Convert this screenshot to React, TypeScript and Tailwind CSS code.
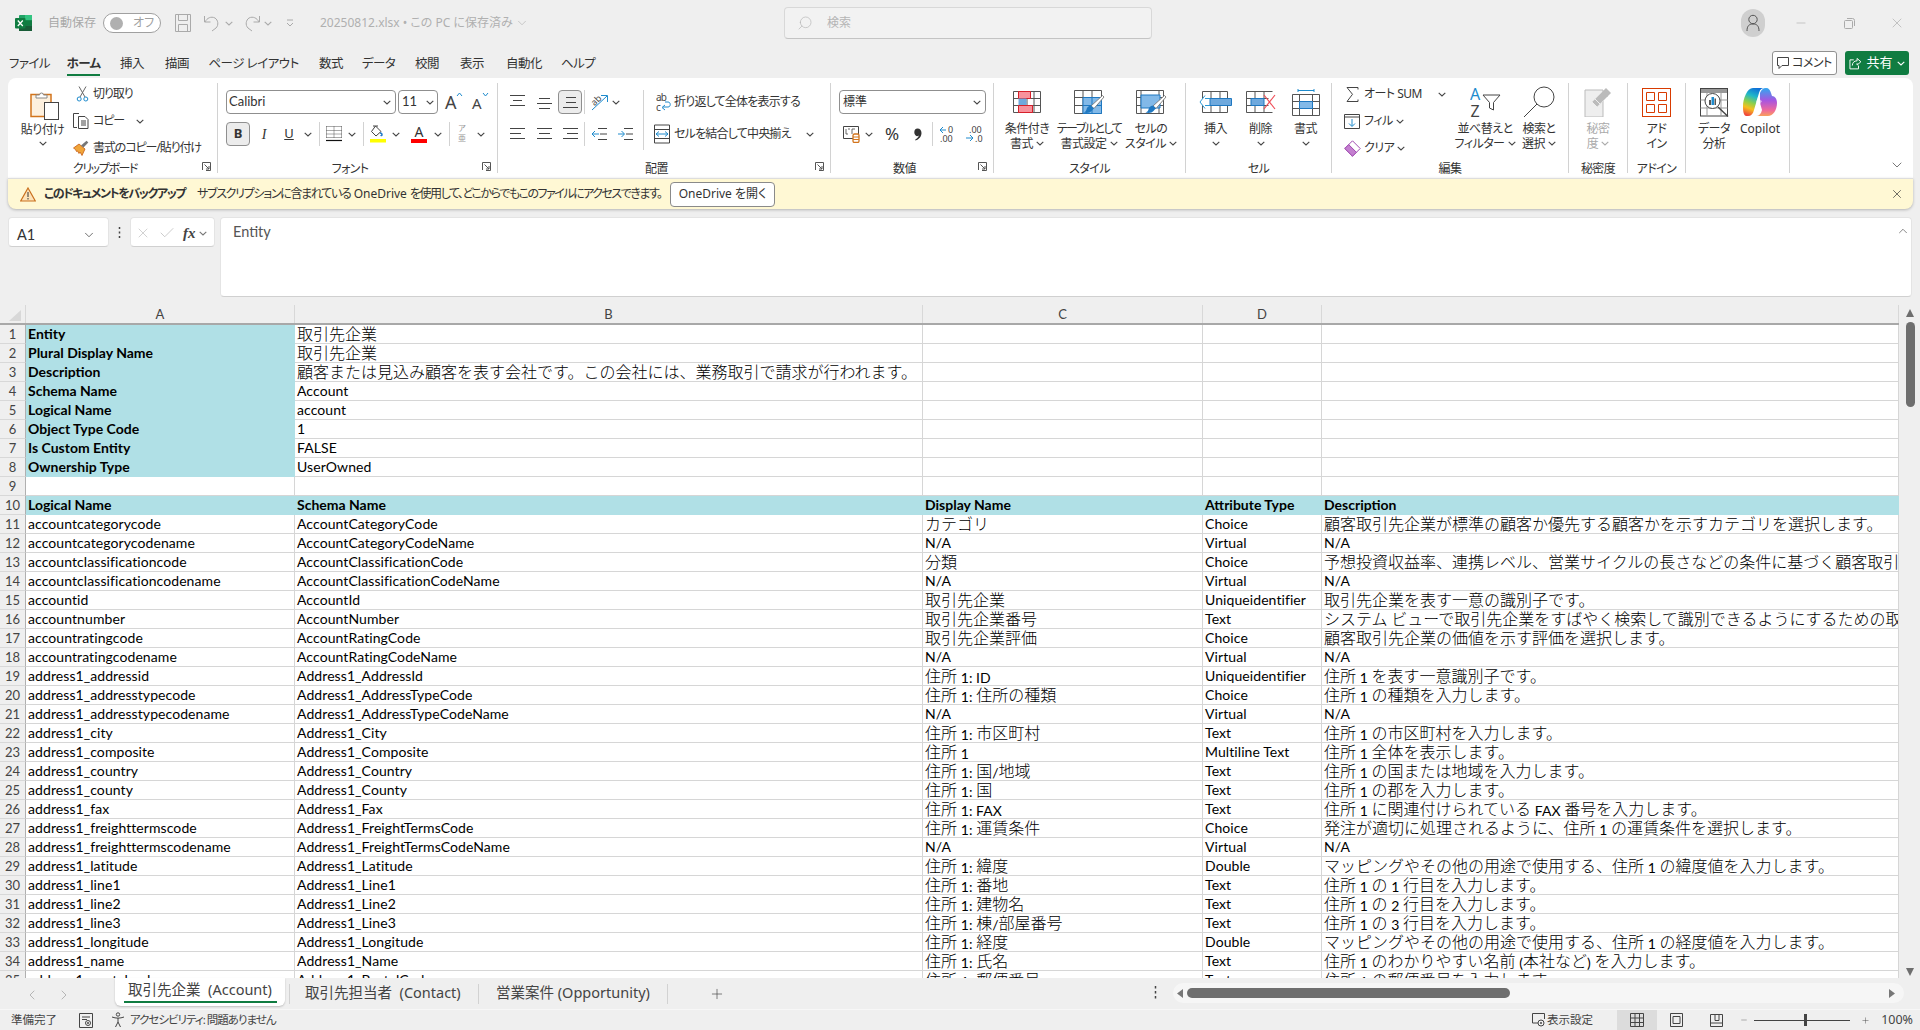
import React from "react";
import { ChevronDown, ChevronUp, ChevronLeft, ChevronRight, X, Minus, Search, Check, Plus } from "lucide-react";

const COLS = "grid grid-cols-[26px_269px_628px_280px_119px_577px]";
const rows: string[][] = [
  ["accountcategorycode","AccountCategoryCode","カテゴリ","Choice","顧客取引先企業が標準の顧客か優先する顧客かを示すカテゴリを選択します。"],
  ["accountcategorycodename","AccountCategoryCodeName","N/A","Virtual","N/A"],
  ["accountclassificationcode","AccountClassificationCode","分類","Choice","予想投資収益率、連携レベル、営業サイクルの長さなどの条件に基づく顧客取引先企業の分類を選択します。"],
  ["accountclassificationcodename","AccountClassificationCodeName","N/A","Virtual","N/A"],
  ["accountid","AccountId","取引先企業","Uniqueidentifier","取引先企業を表す一意の識別子です。"],
  ["accountnumber","AccountNumber","取引先企業番号","Text","システム ビューで取引先企業をすばやく検索して識別できるようにするための取引先企業番号を入力します。"],
  ["accountratingcode","AccountRatingCode","取引先企業評価","Choice","顧客取引先企業の価値を示す評価を選択します。"],
  ["accountratingcodename","AccountRatingCodeName","N/A","Virtual","N/A"],
  ["address1_addressid","Address1_AddressId","住所 1: ID","Uniqueidentifier","住所 1 を表す一意識別子です。"],
  ["address1_addresstypecode","Address1_AddressTypeCode","住所 1: 住所の種類","Choice","住所 1 の種類を入力します。"],
  ["address1_addresstypecodename","Address1_AddressTypeCodeName","N/A","Virtual","N/A"],
  ["address1_city","Address1_City","住所 1: 市区町村","Text","住所 1 の市区町村を入力します。"],
  ["address1_composite","Address1_Composite","住所 1","Multiline Text","住所 1 全体を表示します。"],
  ["address1_country","Address1_Country","住所 1: 国/地域","Text","住所 1 の国または地域を入力します。"],
  ["address1_county","Address1_County","住所 1: 国","Text","住所 1 の郡を入力します。"],
  ["address1_fax","Address1_Fax","住所 1: FAX","Text","住所 1 に関連付けられている FAX 番号を入力します。"],
  ["address1_freighttermscode","Address1_FreightTermsCode","住所 1: 運賃条件","Choice","発注が適切に処理されるように、住所 1 の運賃条件を選択します。"],
  ["address1_freighttermscodename","Address1_FreightTermsCodeName","N/A","Virtual","N/A"],
  ["address1_latitude","Address1_Latitude","住所 1: 緯度","Double","マッピングやその他の用途で使用する、住所 1 の緯度値を入力します。"],
  ["address1_line1","Address1_Line1","住所 1: 番地","Text","住所 1 の 1 行目を入力します。"],
  ["address1_line2","Address1_Line2","住所 1: 建物名","Text","住所 1 の 2 行目を入力します。"],
  ["address1_line3","Address1_Line3","住所 1: 棟/部屋番号","Text","住所 1 の 3 行目を入力します。"],
  ["address1_longitude","Address1_Longitude","住所 1: 経度","Double","マッピングやその他の用途で使用する、住所 1 の経度値を入力します。"],
  ["address1_name","Address1_Name","住所 1: 氏名","Text","住所 1 のわかりやすい名前 (本社など) を入力します。"],
  ["address1_postalcode","Address1_PostalCode","住所 1: 郵便番号","Text","住所 1 の郵便番号を入力します。"],
];
const meta: [string, string][] = [
  ["Entity","取引先企業"],["Plural Display Name","取引先企業"],["Description","顧客または見込み顧客を表す会社です。この会社には、業務取引で請求が行われます。"],
  ["Schema Name","Account"],["Logical Name","account"],["Object Type Code","1"],["Is Custom Entity","FALSE"],["Ownership Type","UserOwned"],
];

function Mixed({ t, bold }: { t: string; bold?: boolean }) {
  const parts = t.split(/([\u0000-\u007f]+)/).filter(Boolean);
  return (
    <>
      {parts.map((p, i) =>
        /^[\u0000-\u007f]+$/.test(p) ? (
          <span key={i} className={`text-[14px] [font-family:Lato,sans-serif] ${bold ? "tracking-[0px]" : "tracking-[0.08px]"}`}>{p}</span>
        ) : (
          <span key={i} className="relative -top-[1px] text-[16px] [font-family:'Noto_Sans_CJK_JP',sans-serif] font-light">{p}</span>
        )
      )}
    </>
  );
}

const cellBase = "overflow-hidden whitespace-pre pl-[2px] h-[19px] leading-[18px] text-black";
const line = "border-r border-b border-[#d6d6d6]";

function RowHead({ n }: { n: number }) {
  return <div className="h-[19px] leading-[18px] bg-[#efefef] border-b border-r border-[#d8d8d8] border-r-[#b0b0b0] text-center text-[13px] text-[#444] [font-family:Lato,sans-serif]">{n}</div>;
}
function Cell({ t, bold, teal }: { t?: string; bold?: boolean; teal?: boolean }) {
  return (
    <div className={`${cellBase} ${teal ? "bg-[#b0e0e6]" : `bg-white ${line}`} ${bold ? "font-bold" : ""}`}>
      {t ? <Mixed t={t} bold={bold} /> : null}
    </div>
  );
}

const Chev = ({ c = "#444", cls = "" }: { c?: string; cls?: string }) => (
  <svg width="8" height="5" viewBox="0 0 8 5" className={`shrink-0 ${cls}`}><path d="M.7.8 4 4 7.3.8" fill="none" stroke={c} strokeWidth="1.1" /></svg>
);
const Sep = ({ cls = "" }: { cls?: string }) => <i className={`block w-px h-[24px] bg-[#d2d2d2] shrink-0 ${cls}`} />;

const Launcher = () => (
  <svg width="9" height="9" viewBox="0 0 9 9" className="block"><path d="M.5 8V.5H8.500V8.500H4" fill="none" stroke="#555" /><path d="M2.500 2.500 7 7M7 4v3H4" fill="none" stroke="#555" /></svg>
);

function Group({ w, label, launcher, children, trk = "tracking-[-0.6px]" }: { w: string; label: string; launcher?: boolean; children: React.ReactNode; trk?: string }) {
  return (
    <div className={`${w} shrink-0 h-[90px] flex flex-col border-r border-[#d2d2d2]`}>
      <div className="h-[77px] flex">{children}</div>
      <div className="h-[13px] flex">
        <div className={`flex-1 text-center leading-[17px] text-[#333] whitespace-nowrap ${trk}`}>{label}</div>
        {launcher ? <div className="w-[12px] mr-[3px] pt-[2px]"><Launcher /></div> : null}
      </div>
    </div>
  );
}

function Big({ w, icon, l1, l2, chev, dim, trk = "tracking-[-0.5px]" }: { w: string; icon: React.ReactNode; l1: string; l2?: string; chev?: boolean; dim?: boolean; trk?: string }) {
  return (
    <div className={`${w} shrink-0 flex flex-col items-center ${dim ? "text-[#aaa]" : "text-[#333]"}`}>
      <div className="h-[38px] flex items-center justify-center">{icon}</div>
      <div className={`h-[15px] leading-[15px] whitespace-nowrap ${trk}`}>{l1}</div>
      <div className="h-[15px] leading-[15px] whitespace-nowrap tracking-[-0.5px] flex items-center gap-[3px]">
        {l2 ? <span>{l2}</span> : null}
        {chev ? <Chev c={dim ? "#aaa" : "#444"} /> : null}
      </div>
    </div>
  );
}

const Brush = ({ dx = 0, dy = 0 }: { dx?: number; dy?: number }) => (
  <g transform={`translate(${dx} ${dy})`}>
    <path d="M28.500 4.500 30 6 20 17.500 17 15z" fill="#fff" stroke="#777" strokeWidth=".9" />
    <path d="M17 14.500c-3 .5-4 2-4.500 4-.4 1.500-1.500 2.500-3 3 3 1 6.500.5 8-1.500 1-1 1.500-2 2.500-2.500z" fill="#1f78c1" />
  </g>
);
const gridPath = "M.5.5h27v21H.5zM.5 7.500h27M.5 14.500h27M7.500.5v21M14 .5v21M21 .5v21";

const IconPaste = () => (
  <svg width="30" height="30" viewBox="0 0 30 30"><rect x="1" y="4.500" width="20" height="22" fill="#fdf0de" stroke="#d2741c" strokeWidth="1.500" /><path d="M6 5h3.500a2 2 0 0 1 4 0H17v3H6z" fill="#fff" stroke="#888" /><rect x="14.500" y="12.500" width="14" height="17" fill="#fff" stroke="#444" /></svg>
);
const IconCut = () => (
  <svg width="13" height="16" viewBox="0 0 13 16"><path d="M3 .5 9 11M10 .5 4 11" fill="none" stroke="#666" /><circle cx="3.200" cy="13" r="2" fill="none" stroke="#1e8bcd" /><circle cx="9.800" cy="13" r="2" fill="none" stroke="#1e8bcd" /></svg>
);
const IconCopy = () => (
  <svg width="16" height="16" viewBox="0 0 16 16"><path d="M4 14.500H.5V.5H6" fill="none" stroke="#444" /><path d="M5.500 3.500H12l3 3v9H5.500z" fill="#fff" stroke="#444" /><path d="M8 8h5M8 10h5M8 12h5" stroke="#444" /></svg>
);
const IconFmt = () => (
  <svg width="16" height="16" viewBox="0 0 16 16"><path d="M.5 8 6 4l6 5-3 6.500L7 12l-1 1.500-1.500-2.500-1 .5-1-2z" fill="#f0a53a" stroke="#c55a11" strokeWidth=".8" /><path d="M8 5.500 13.500.8l1.800 1.700L10.500 7.500z" fill="#777" /></svg>
);
const Lines = ({ y0, a, b, c }: { y0: number; a: string; b: string; c: string }) => (
  <svg width="15" height="18" viewBox="0 0 15 18"><path d={`${a} ${b} ${c}`} fill="none" stroke="#444" strokeWidth="1" transform={`translate(0 ${y0})`} /></svg>
);
const L = {
  top: <Lines y0={0} a="M0 2.500h15" b="M3 7.500h9" c="M0 12.500h15" />,
  mid: <Lines y0={3} a="M2 2.500h11" b="M0 7.500h15" c="M2 12.500h11" />,
  bot: <Lines y0={2} a="M3 2.500h10" b="M3 7.500h10" c="M0 12.500h16" />,
  left: <Lines y0={1} a="M0 2.500h15" b="M0 7.500h11" c="M0 12.500h15" />,
  ctr: <Lines y0={1} a="M0 2.500h15" b="M2 7.500h11" c="M0 12.500h15" />,
  right: <Lines y0={1} a="M0 2.500h15" b="M4 7.500h11" c="M0 12.500h15" />,
};
const IconIndent = ({ rev }: { rev?: boolean }) => (
  <svg width="15" height="16" viewBox="0 0 15 16">
    <path d="M6 2.500h9M8 8h7M6 13.500h9" stroke="#444" fill="none" />
    {rev ? <path d="M0 8h7M3 5 0 8l3 3" stroke="#1e8bcd" fill="none" /> : null}
    {!rev ? <path d="M0 8h6M3.500 5 6.500 8l-3 3" stroke="#1e8bcd" fill="none" /> : null}
  </svg>
);

const IconOrient = () => (
  <svg width="18" height="18" viewBox="0 0 18 18"><text x="1" y="11" fontSize="9" fill="#444" transform="rotate(-45 5 9)" fontFamily="Noto Sans">ab</text><path d="M1 17 16 3M10 2.500h6.500V9" fill="none" stroke="#1e8bcd" strokeWidth="1" /></svg>
);
const IconWrap = () => (
  <svg width="15" height="20" viewBox="0 0 15 20"><text x="0" y="9" fontSize="10" fill="#444" fontFamily="Noto Sans">ab</text><text x="0" y="19" fontSize="10" fill="#444" fontFamily="Noto Sans">c</text><path d="M7 15h5c3 0 3-5 0-5H9M9 13 6 15.500 9 18" fill="none" stroke="#1e8bcd" /></svg>
);
const IconMerge = () => (
  <svg width="16" height="20" viewBox="0 0 16 20"><path d="M.5 1h15v18H.5zM.5 5.500h15M.5 14.500h15" fill="#fff" stroke="#444" /><path d="M2 10h12M5 7.500 2 10l3 2.500M11 7.500 14 10l-3 2.500" fill="none" stroke="#1e8bcd" /></svg>
);
const IconAcc = () => (
  <svg width="17" height="17" viewBox="0 0 17 17"><path d="M10 12.500H.5V.5h15V8" fill="none" stroke="#444" /><path d="M3 3v5h2M7 3h-2M9 3v5M9 3h3" fill="none" stroke="#444" strokeWidth=".8" /><rect x="10" y="8" width="6" height="8.500" rx="1.500" fill="#fff" stroke="#d2741c" strokeWidth="1.300" /><path d="M10 11h6M10 13.500h6" stroke="#d2741c" /></svg>
);
const IconComma = () => (
  <svg width="8" height="13" viewBox="0 0 8 13"><path d="M3.500.5c2.500 0 4 1.800 4 4.500 0 3.500-2.500 6.500-6 7.500l-.4-.8c2-1 3.400-2.500 3.700-4.200-.6.5-1.100.7-1.800.7C1.500 7.700.3 6.200.3 4.200.3 2 1.500.5 3.500.5z" fill="#333" /></svg>
);
const IconInc = () => (
  <svg width="17" height="18" viewBox="0 0 17 18"><path d="M1 5h6M4 2 1 5l3 3" stroke="#1e8bcd" fill="none" /><text x="9" y="8" fontSize="9" fill="#444" fontFamily="Noto Sans">0</text><text x="1" y="17" fontSize="9" fill="#444" fontFamily="Noto Sans">.00</text></svg>
);
const IconDec = () => (
  <svg width="18" height="18" viewBox="0 0 18 18"><text x="4" y="8" fontSize="9" fill="#444" fontFamily="Noto Sans">.00</text><path d="M1 13h7M5 10l3 3-3 3" stroke="#1e8bcd" fill="none" /><text x="10" y="17" fontSize="9" fill="#444" fontFamily="Noto Sans">.0</text></svg>
);
const IconBorders = () => (
  <svg width="16" height="16" viewBox="0 0 16 16"><path d="M.5.5h15M.5 4.500h15M.5 8h15M.5 11.500h15M.5.5v12M8 .5v12M15.500.5v12" fill="none" stroke="#555" strokeDasharray="1 1" /><path d="M0 14.500h16" stroke="#111" strokeWidth="1.200" /></svg>
);
const IconFill = () => (
  <svg width="16" height="18" viewBox="0 0 16 18"><path d="M5.500 1 11 6.500 6 11 1.500 6.500z" fill="#fff" stroke="#444" /><path d="M3 1h5" stroke="#444" /><path d="M10 8c1 0 2 1 2 2 0 .5-1 1-1 0" stroke="#1e78c8" strokeWidth="1.500" fill="none" /><rect y="14" width="16" height="3.500" fill="#ffff00" /></svg>
);
const IconCF = () => (
  <svg width="28" height="22" viewBox="0 0 28 22"><path d={gridPath} fill="#fff" stroke="#555" /><path d="M5.500.5h12v7h-12z" fill="#f8929c" stroke="#d6202a" /><path d="M5.500 7.500h8v7h-8z" fill="#6fa9dd" /><path d="M5.500 14.500h14v7h-14z" fill="#f8929c" stroke="#d6202a" /></svg>
);
const IconTable = () => (
  <svg width="31" height="26" viewBox="0 0 31 26"><path d="M.5 1.500h27v23H.5zM.5 8.500h27M.5 16.500h27M9 1.500v23M18 1.500v23" fill="#fff" stroke="#555" /><path d="M9 8.500h18.500v16H9z" fill="#82b9e8" stroke="#1f78c1" /><path d="M9 16.500h18.500M18 8.500v16" stroke="#1f78c1" /><Brush dx={0} dy={2} /></svg>
);
const IconStyle = () => (
  <svg width="31" height="26" viewBox="0 0 31 26"><path d="M.5 1.500h27v23H.5zM.5 8.500h27M.5 16.500h27M5 1.500v23M23 1.500v23" fill="#fff" stroke="#555" /><path d="M5 6h19v13H5z" fill="#82b9e8" stroke="#1f78c1" /><Brush dx={0} dy={2} /></svg>
);
const IconInsert = () => (
  <svg width="33" height="22" viewBox="0 0 33 22"><path d="M3.500.5h25v21h-25zM3.500 7.500h25M3.500 14.500h25M12 .5v21M21 .5v21" fill="#fff" stroke="#555" /><path d="M11 7.500h21.500v7H11z" fill="#6fa9dd" stroke="#1f78c1" /><path d="M11 7.500H6M11 14.500H6M6 4.500 1 11l5 6.500" fill="#fff" stroke="#2b9ad8" /></svg>
);
const IconDelete = () => (
  <svg width="30" height="22" viewBox="0 0 30 22"><path d="M.5.5h26M.5 21.500h26M.5.5v21M9 .5v21M18 .5v7M18 14.500v7M.5 7.500h22M.5 14.500h22" fill="none" stroke="#555" /><path d="M5 7.500h13v7H5z" fill="#6fa9dd" stroke="#1f78c1" /><path d="M18 4l11 14M29 4 18 18" stroke="#f0505a" strokeWidth="1.200" /></svg>
);
const IconFormat = () => (
  <svg width="28" height="27" viewBox="0 0 28 27"><path d="M6 1.500h16M6 0v3M22 0v3" stroke="#1e8bcd" fill="none" /><path d="M.5 5.500h27v21H.5zM.5 12.500h27M.5 19.500h27M7.500 5.500v21M20.500 5.500v21" fill="#fff" stroke="#555" /><path d="M7.500 12.500h13v7h-13z" fill="#82b9e8" stroke="#1f78c1" /></svg>
);
const IconSum = () => (
  <svg width="13" height="15" viewBox="0 0 13 15"><path d="M12 2.500V.5H1l5.500 6.800L1 14.500h11v-2" fill="none" stroke="#444" /></svg>
);
const IconFillDown = () => (
  <svg width="16" height="15" viewBox="0 0 16 15"><path d="M.5.5h15v14H.5zM.5 3h15" fill="#fff" stroke="#444" /><path d="M8 5v7M5 9.500 8 12.500l3-3" fill="none" stroke="#1e8bcd" /></svg>
);
const IconClear = () => (
  <svg width="17" height="17" viewBox="0 0 17 17"><path d="M.8 8.500 8.500.8l7.700 7.700-7.700 7.700z" fill="#fff" stroke="#a04bb0" /><path d="M.8 8.500 4.700 4.600l7.700 7.700-3.900 3.900z" fill="#c47fd0" stroke="#a04bb0" /></svg>
);
const IconSort = () => (
  <svg width="31" height="31" viewBox="0 0 31 31"><text x="0" y="13" fontSize="16" fill="#1e8bcd" fontFamily="Noto Sans">A</text><text x="0.500" y="30" fontSize="16" fill="#444" fontFamily="Noto Sans">Z</text><path d="M13 8h17l-6.500 7.500V23l-4-2v-5.500z" fill="#fff" stroke="#444" /></svg>
);
const IconFind = () => (
  <svg width="32" height="32" viewBox="0 0 32 32"><circle cx="21" cy="11" r="10" fill="#fff" stroke="#444" /><path d="M14 18 1 31" stroke="#444" /></svg>
);
const IconSens = () => (
  <svg width="28" height="30" viewBox="0 0 28 30"><path d="M1 3h18v27H1z" fill="#eee" stroke="#bbb" /><path d="M8 15 19 4l5 5-11 11z" fill="#bbb" stroke="#ddd" /><path d="M8 15l5 5M11 12l5 5" stroke="#eee" /><path d="M18 5l4-4 5 5-4 4z" fill="#bbb" /></svg>
);
const IconAddin = () => (
  <svg width="29" height="29" viewBox="0 0 29 29"><rect x=".5" y=".5" width="28" height="28" fill="#fff" stroke="#d83b01" /><path d="M4.500 4.500h8v8h-8zM16.500 4.500h8v8h-8zM4.500 16.500h8v8h-8zM16.500 16.500h8v8h-8z" fill="none" stroke="#d83b01" /></svg>
);
const IconData = () => (
  <svg width="29" height="29" viewBox="0 0 29 29"><rect x=".5" y=".5" width="27" height="27.500" fill="#fff" stroke="#444" /><rect x="1" y="1" width="26" height="4" fill="#999" /><path d="M.5 12h27M.5 20h27M7 5v23M21 5v23" stroke="#999" /><circle cx="12.500" cy="13" r="7.500" fill="#fff" stroke="#444" /><path d="M18 19l10 9.500" stroke="#444" strokeWidth="1.400" /><rect x="9" y="12" width="2" height="5" fill="#555" /><rect x="11.500" y="9" width="2.500" height="8" fill="#1e8bcd" /><rect x="14.500" y="10.500" width="1.500" height="6.500" fill="#555" /></svg>
);
const IconCopilot = () => (
  <svg width="36" height="30" viewBox="0 0 36 30">
    <defs>
      <linearGradient id="cpa" x1="0.6" y1="0" x2="0.3" y2="1"><stop offset="0" stopColor="#0f6fd8" /><stop offset=".3" stopColor="#20b8c8" /><stop offset=".55" stopColor="#8ed04a" /><stop offset=".75" stopColor="#f6c01e" /><stop offset="1" stopColor="#f0483c" /></linearGradient>
      <linearGradient id="cpb" x1="0.5" y1="0" x2="0.5" y2="1"><stop offset="0" stopColor="#2fa8f0" /><stop offset=".45" stopColor="#a855e0" /><stop offset=".8" stopColor="#f06a9a" /><stop offset="1" stopColor="#f8a05a" /></linearGradient>
    </defs>
    <path d="M11 1h12c-3 0-5 1-6 5l-5 17c-1 4-3 6-6 6H4C1 28 1 22 1 19 1 12 5 1 11 1z" fill="url(#cpa)" />
    <path d="M18 6c1-3 3-5 6-5 3 0 4 2 5 5l1 3c3 0 5 3 5 7 0 7-4 13-9 13H14c3 0 5-2 6-6l-2-7z" fill="url(#cpb)" />
    <path d="M16 10c0 0 3 4 4 4l-3 5-3-4z" fill="#fff" opacity=".55" />
  </svg>
);

const IconSaveTitle = () => (
  <svg width="16" height="18" viewBox="0 0 16 18"><path d="M.5.5h15v17H.5zM3.500.5v6h9v-6M3.500 17.500v-7h9v7" fill="none" stroke="#aaa" /></svg>
);
const IconUndo = ({ flip }: { flip?: boolean }) => (
  <svg width="18" height="18" viewBox="0 0 18 18" className={flip ? "-scale-x-100" : ""}><path d="M1.500 2v6h6M2 8c2-4 6-6 10-4 3 2 4 7 1 10l-4 3" fill="none" stroke="#aaa" /></svg>
);
const IconExcel = () => (
  <svg width="18" height="17" viewBox="0 0 18 17">
    <rect x="4" y="0" width="13" height="16" rx="1" fill="#21a366" />
    <rect x="10" y="0" width="7" height="5.300" fill="#33c481" />
    <rect x="10" y="5.300" width="7" height="5.300" fill="#107c41" />
    <rect x="4" y="10.600" width="13" height="5.400" fill="#185c37" />
    <rect x="0" y="3" width="10.500" height="10.500" rx="1" fill="#107c41" />
    <path d="M2.800 5.500 7.800 11M7.800 5.500 2.800 11" stroke="#fff" strokeWidth="1.300" />
  </svg>
);

const tabsTop: [string, string, string, boolean?][] = [
  ["ファイル", "w-[37px]", "ml-[11px]"], ["ホーム", "w-[33px]", "ml-[19px]", true], ["挿入", "w-[26px]", "ml-[19px]"], ["描画", "w-[26px]", "ml-[19px]"],
  ["ページ レイアウト", "w-[87px]", "ml-[20px]"], ["数式", "w-[26px]", "ml-[21px]"], ["データ", "w-[33px]", "ml-[18px]"], ["校閲", "w-[26px]", "ml-[19px]"],
  ["表示", "w-[26px]", "ml-[19px]"], ["自動化", "w-[38px]", "ml-[20px]"], ["ヘルプ", "w-[34px]", "ml-[18px]"],
];

export default function App() {
  return (
    <div className="w-[1920px] h-[1030px] overflow-hidden bg-[#efefef] text-[#333] text-[12px] [font-family:'Noto_Sans','Noto_Sans_CJK_JP',sans-serif] [font-feature-settings:'palt']">
      {/* Title bar */}
      <div className="h-[46px] flex items-center">
        <div className="w-[784px] shrink-0 flex items-center text-[#a8a8a8]">
          <div className="ml-[15px] w-[18px]"><IconExcel /></div>
          <span className="ml-[15px] w-[48px] text-[12px] whitespace-nowrap">自動保存</span>
          <div className="ml-[7px] w-[58px] h-[20px] rounded-full border border-[#a0a0a0] bg-white flex items-center">
            <i className="block ml-[6px] w-[13px] h-[13px] rounded-full bg-[#b0b0b0]" />
            <span className="ml-[10px] text-[#a0a0a0]">オフ</span>
          </div>
          <div className="ml-[14px]"><IconSaveTitle /></div>
          <div className="ml-[12px]"><IconUndo /></div>
          <Chev c="#aaa" cls="ml-[4px]" />
          <div className="ml-[10px]"><IconUndo flip /></div>
          <Chev c="#aaa" cls="ml-[3px]" />
          <svg width="8" height="8" viewBox="0 0 8 8" className="ml-[14px]"><path d="M1 1h6M1 4l3 3 3-3" fill="none" stroke="#aaa" /></svg>
          <span className="ml-[26px] whitespace-nowrap text-[12px] text-[#b0b0b0]">20250812.xlsx • この PC に保存済み</span>
          <ChevronDown size={14} strokeWidth={1} className="ml-[2px] text-[#aaa]" />
        </div>
        <div className="w-[368px] h-[32px] shrink-0 rounded-[4px] border border-[#d8d8d8] border-b-[#c4c4c4] bg-[#f2f2f2] flex items-center text-[#b5b5b5]">
          <Search size={16} strokeWidth={1} className="ml-[12px] -scale-x-100" />
          <span className="ml-[14px]">検索</span>
        </div>
        <div className="flex-1 flex items-center justify-end text-[#aaa]">
          <div className="w-[24px] h-[28px] mr-[12px] rounded-full bg-[#cfcfcf] flex items-center justify-center">
            <svg width="14" height="18" viewBox="0 0 14 18"><circle cx="7" cy="5.500" r="4.200" fill="none" stroke="#555" /><path d="M1 17c0-5 2-7 6-7s6 2 6 7" fill="none" stroke="#555" /></svg>
          </div>
          <div className="w-[48px] flex justify-center"><Minus size={14} strokeWidth={1} /></div>
          <div className="w-[48px] flex justify-center">
            <svg width="11" height="11" viewBox="0 0 11 11"><rect x=".5" y="2.500" width="8" height="8" rx="1" fill="none" stroke="#aaa" /><path d="M3 .5h5.500a2 2 0 0 1 2 2V8" fill="none" stroke="#aaa" /></svg>
          </div>
          <div className="w-[47px] flex justify-center"><X size={16} strokeWidth={1} /></div>
        </div>
      </div>

      {/* Menu row */}
      <div className="h-[32px] flex">
        {tabsTop.map(([t, w, ml, on]) => (
          <div key={t} className={`${w} ${ml} shrink-0 h-[32px] flex flex-col items-center`}>
            <span className={`h-[26px] mt-[5px] leading-[26px] text-[12.5px] tracking-[-0.5px] whitespace-nowrap text-[#333] ${on ? "font-bold" : ""}`}>{t}</span>
            {on ? <i className="block w-full h-[2px] bg-[#107c41] -mt-[3px]" /> : null}
          </div>
        ))}
        <div className="flex-1" />
        <div className="mt-[5px] w-[65px] h-[24px] rounded-[3px] border border-[#909090] bg-white flex items-center justify-center gap-[3px] mr-[8px]">
          <svg width="12" height="12" viewBox="0 0 12 12"><path d="M.5.5h11v8H5l-3 3v-3H.5z" fill="none" stroke="#444" /></svg>
          <span className="whitespace-nowrap tracking-[-0.5px]">コメント</span>
        </div>
        <div className="mt-[5px] w-[64px] h-[24px] rounded-[3px] bg-[#107c41] text-white flex items-center justify-center gap-[4px] mr-[11px]">
          <svg width="13" height="13" viewBox="0 0 13 13"><path d="M5 3H1v9.500h9V9M3.500 9c0-3 2-5 5-5V1.500l4 3.500-4 3.500V6.500" fill="none" stroke="#fff" transform="scale(.95)" /></svg>
          <span className="text-[13px]">共有</span>
          <Chev c="#fff" />
        </div>
      </div>

      {/* Ribbon */}
      <div className="ml-[8px] mr-[7px] h-[100px] bg-white rounded-t-[8px] flex py-[5px]">
        <Group w="w-[210px]" label="クリップボード" launcher trk="tracking-[-1.4px]">
          <div className="ml-[14px] w-[41px] flex flex-col items-center">
            <div className="h-[34px] mt-[3px] ml-[5px] flex items-end"><IconPaste /></div>
            <span className="mt-[2px] h-[16px] leading-[16px] tracking-[-0.5px] whitespace-nowrap">貼り付け</span>
            <Chev cls="mt-[3px]" />
          </div>
          <div className="ml-[10px] flex flex-col gap-[5px] tracking-[-1.1px]">
            <div className="h-[22px] flex items-center"><span className="w-[16px] ml-[3px] -mr-[3px]"><IconCut /></span><span className="ml-[4px] whitespace-nowrap">切り取り</span></div>
            <div className="h-[22px] flex items-center"><IconCopy /><span className="ml-[4px] w-[27px] whitespace-nowrap">コピー</span><Chev cls="ml-[16px]" /></div>
            <div className="h-[22px] flex items-center"><IconFmt /><span className="ml-[4px] whitespace-nowrap">書式のコピー/貼り付け</span></div>
          </div>
        </Group>

        <Group w="w-[280px]" label="フォント" launcher>
          <div className="pl-[8px] pt-[7px] flex flex-col gap-[8px]">
            <div className="h-[24px] flex items-center">
              <div className="w-[170px] h-[24px] rounded-[4px] border border-[#8f8f8f] flex items-center justify-between px-[2px] pr-[4px] [font-family:Lato,sans-serif] text-[13px]">Calibri<Chev /></div>
              <div className="ml-[2px] w-[40px] h-[24px] rounded-[4px] border border-[#8f8f8f] flex items-center justify-between px-[3px] [font-family:Lato,sans-serif] text-[13px]">11<Chev /></div>
              <div className="ml-[7px] w-[17px] h-[20px] flex text-[18px] leading-[20px] text-[#444]">A<svg width="7" height="5" viewBox="0 0 7 5" className="shrink-0 -ml-[1px]"><path d="M1 4l2.500-3L6 4" fill="none" stroke="#1e8bcd" /></svg></div>
              <div className="ml-[10px] w-[14px] h-[20px] flex text-[15px] leading-[22px] text-[#444]">A<svg width="7" height="5" viewBox="0 0 7 5" className="shrink-0"><path d="M1 1l2.500 3L6 1" fill="none" stroke="#1e8bcd" /></svg></div>
            </div>
            <div className="h-[24px] flex items-center">
              <div className="w-[24px] h-[24px] rounded-[4px] border border-[#8f8f8f] bg-[#ececec] flex items-center justify-center font-bold text-[13px]">B</div>
              <div className="ml-[2px] w-[24px] text-center italic text-[14px] [font-family:'Liberation_Serif',serif]">I</div>
              <div className="ml-[1px] w-[24px] text-center underline text-[13px]">U</div>
              <Chev cls="ml-[3px]" />
              <Sep cls="ml-[7px]" />
              <div className="ml-[6px]"><IconBorders /></div>
              <Chev cls="ml-[6px]" />
              <Sep cls="ml-[7px]" />
              <div className="ml-[6px]"><IconFill /></div>
              <Chev cls="ml-[6px]" />
              <div className="ml-[11px] w-[16px] h-[20px] flex flex-col items-center"><span className="text-[14px] leading-[15px]">A</span><i className="block w-[16px] h-[4px] bg-[#ff0000]" /></div>
              <Chev cls="ml-[7px]" />
              <Sep cls="ml-[7px]" />
              <div className="ml-[6px] w-[12px] h-[22px] flex flex-col items-center text-[#999] text-[8px] leading-[10px]"><span>ア</span><span>亜</span></div>
              <Chev cls="ml-[9px]" />
            </div>
          </div>
        </Group>

        <Group w="w-[333px]" label="配置" launcher>
          <div className="w-[146px] mt-[7px] h-[60px] shrink-0 border-r border-[#d2d2d2] pl-[12px] flex flex-col gap-[8px]">
            <div className="h-[24px] flex items-center">
              {L.top}
              <div className="ml-[12px]">{L.mid}</div>
              <div className="ml-[6px] w-[24px] h-[24px] rounded-[4px] border border-[#8f8f8f] bg-[#ececec] flex items-center justify-center">{L.bot}</div>
              <Sep cls="ml-[2px]" />
              <div className="ml-[6px]"><IconOrient /></div>
              <Chev cls="ml-[3px]" />
            </div>
            <div className="h-[24px] flex items-center">
              {L.left}
              <div className="ml-[12px]">{L.ctr}</div>
              <div className="ml-[11px]">{L.right}</div>
              <Sep cls="ml-[6px]" />
              <div className="ml-[7px]"><IconIndent rev /></div>
              <div className="ml-[11px]"><IconIndent /></div>
            </div>
          </div>
          <div className="pt-[7px] flex flex-col gap-[8px] tracking-[-0.8px]">
            <div className="h-[24px] flex items-center whitespace-nowrap"><span className="ml-[12px]"><IconWrap /></span><span className="ml-[3px]">折り返して全体を表示する</span></div>
            <div className="h-[24px] flex items-center whitespace-nowrap"><span className="ml-[10px]"><IconMerge /></span><span className="ml-[4px] w-[116px]">セルを結合して中央揃え</span><Chev cls="ml-[16px]" /></div>
          </div>
        </Group>

        <Group w="w-[163px]" label="数値" launcher>
          <div className="pl-[8px] pt-[7px] flex flex-col gap-[8px]">
            <div className="w-[147px] h-[24px] rounded-[4px] border border-[#8f8f8f] flex items-center justify-between pl-[3px] pr-[4px]">標準<Chev /></div>
            <div className="h-[24px] flex items-center">
              <div className="ml-[4px]"><IconAcc /></div>
              <Chev cls="ml-[5px]" />
              <div className="ml-[11px] w-[16px] text-center text-[17px] leading-[24px]">%</div>
              <div className="ml-[14px] w-[9px]"><IconComma /></div>
              <Sep cls="ml-[9px]" />
              <div className="ml-[6px]"><IconInc /></div>
              <div className="ml-[9px]"><IconDec /></div>
            </div>
          </div>
        </Group>

        <Group w="w-[192px]" label="スタイル">
          <div className="pl-[2px] flex">
            <Big w="w-[62px]" icon={<IconCF />} l1="条件付き" l2="書式" chev />
            <Big w="w-[62px]" icon={<IconTable />} l1="テーブルとして" l2="書式設定" chev trk="tracking-[-1.5px]" />
            <Big w="w-[62px]" icon={<IconStyle />} l1="セルの" l2="スタイル" chev />
          </div>
        </Group>

        <Group w="w-[146px]" label="セル">
          <div className="pl-[7px] flex">
            <Big w="w-[45px]" icon={<IconInsert />} l1="挿入" chev />
            <Big w="w-[45px]" icon={<IconDelete />} l1="削除" chev />
            <Big w="w-[45px]" icon={<IconFormat />} l1="書式" chev />
          </div>
        </Group>

        <Group w="w-[237px]" label="編集">
          <div className="ml-[12px] w-[110px] flex flex-col gap-[5px] tracking-[-0.5px]">
            <div className="h-[22px] flex items-center"><span className="w-[14px] ml-[2px]"><IconSum /></span><span className="ml-[4px] w-[57px] whitespace-nowrap">オート SUM</span><Chev cls="ml-[17px]" /></div>
            <div className="h-[22px] flex items-center"><IconFillDown /><span className="ml-[4px] whitespace-nowrap">フィル</span><Chev cls="ml-[3px]" /></div>
            <div className="h-[22px] flex items-center"><IconClear /><span className="ml-[3px] whitespace-nowrap">クリア</span><Chev cls="ml-[3px]" /></div>
          </div>
          <Big w="w-[62px]" icon={<IconSort />} l1="並べ替えと" l2="フィルター" chev />
          <Big w="w-[46px]" icon={<IconFind />} l1="検索と" l2="選択" chev />
        </Group>

        <Group w="w-[59px]" label="秘密度">
          <Big w="w-[58px]" icon={<IconSens />} l1="秘密" l2="度" chev dim />
        </Group>
        <Group w="w-[58px]" label="アドイン">
          <Big w="w-[57px]" icon={<IconAddin />} l1="アド" l2="イン" />
        </Group>
        <Group w="w-[104px]" label="">
          <div className="pl-[3px] flex">
            <Big w="w-[50px]" icon={<IconData />} l1="データ" l2="分析" />
            <Big w="w-[42px]" icon={<IconCopilot />} l1="Copilot" trk="tracking-[0px]" />
          </div>
        </Group>
        <div className="flex-1 flex items-end justify-end pr-[8px]"><ChevronDown size={16} strokeWidth={1} /></div>
      </div>

      {/* Notification */}
      <div className="ml-[8px] mr-[7px] h-[31px] bg-[#fff8d4] border-t border-[#ddd] rounded-b-[8px] shadow-[0_1px_3px_rgba(0,0,0,0.25)] flex items-center">
        <svg width="16" height="15" viewBox="0 0 16 15" className="ml-[12px]"><path d="M8 1 15.300 14H.7z" fill="#fde3b8" stroke="#c9701e" strokeWidth="1.200" /><path d="M8 5v5M8 11v1.500" stroke="#333" /></svg>
        <span className="ml-[8px] w-[143px] font-bold whitespace-nowrap tracking-[-1.4px]">このドキュメントをバックアップ</span>
        <span className="ml-[10px] w-[455px] whitespace-nowrap"><span className="tracking-[-1.3px]">サブスクリプションに含まれている</span> OneDrive <span className="tracking-[-1.5px]">を使用して、どこからでもこのファイルにアクセスできます。</span></span>
        <div className="ml-[18px] w-[105px] h-[25px] rounded-[4px] border border-[#8a8a8a] bg-white flex items-center justify-center whitespace-nowrap">OneDrive を開く</div>
        <div className="flex-1" />
        <X size={14} strokeWidth={1.2} className="mr-[9px]" />
      </div>

      {/* Formula bar */}
      <div className="mt-[8px] h-[80px] flex items-start ml-[8px] mr-[8px]">
        <div className="w-[101px] h-[30px] rounded-[4px] bg-white border border-[#e4e4e4] border-b-[#d0d0d0] flex items-center justify-between pl-[8px] pr-[12px] pt-[5px] text-[14.5px] [font-family:Lato,sans-serif]">A1<ChevronDown size={14} strokeWidth={1.2} /></div>
        <div className="w-[21px] h-[30px] flex items-center justify-center"><svg width="3" height="11" viewBox="0 0 3 11"><path d="M1.500 0v2M1.500 4.500v2M1.500 9v2" stroke="#444" strokeWidth="1.500" /></svg></div>
        <div className="w-[85px] h-[30px] rounded-[4px] bg-white border border-[#e4e4e4] border-b-[#d0d0d0] flex items-center pt-[2px] text-[#bbb]">
          <X size={16} strokeWidth={1} className="ml-[4px]" />
          <Check size={18} strokeWidth={1} className="ml-[7px]" />
          <span className="ml-[7px] w-[15px] text-[15px] text-[#444] italic font-bold [font-family:'Liberation_Serif',serif]">fx</span>
          <Chev c="#777" cls="ml-[1px]" />
        </div>
        <div className="ml-[5px] flex-1 h-[80px] rounded-[4px] bg-white border border-[#e4e4e4] border-b-[#d0d0d0] flex items-start justify-between pl-[12px] text-[14.5px] text-[#555] [font-family:Lato,sans-serif]">
          <span className="mt-[3px]">Entity</span>
          <ChevronUp size={14} strokeWidth={1.2} className="mt-[6px] mr-[1px]" />
        </div>
      </div>

      {/* Sheet */}
      <div className="mt-[8px] h-[673px] flex">
        <div className="w-[1899px] shrink-0 h-[673px] overflow-hidden [font-feature-settings:normal]">
          <div className={`${COLS} h-[20px] border-b-2 border-[#a8a8a8] text-[13px] text-[#444] text-center [font-family:Lato,sans-serif] leading-[18px]`}>
            <div className="flex justify-end items-end pr-[4px] pb-[2px] border-r border-[#d8d8d8]"><svg width="12" height="11" viewBox="0 0 12 11" className="block"><path d="M12 0v11H0z" fill="#d8d8d8" /></svg></div>
            {["A", "B", "C", "D", ""].map((c, i) => <div key={i} className="border-r border-[#d8d8d8]">{c}</div>)}
          </div>
          {meta.map(([k, v], i) => (
            <div key={k} className={COLS}>
              <RowHead n={i + 1} />
              <Cell t={k} bold teal />
              <Cell t={v} />
              <Cell /><Cell /><Cell />
            </div>
          ))}
          <div className={COLS}><RowHead n={9} /><Cell /><Cell /><Cell /><Cell /><Cell /></div>
          <div className={COLS}>
            <RowHead n={10} />
            {["Logical Name", "Schema Name", "Display Name", "Attribute Type", "Description"].map((h) => <Cell key={h} t={h} bold teal />)}
          </div>
          {rows.map((r, i) => (
            <div key={r[0]} className={COLS}>
              <RowHead n={i + 11} />
              {r.map((c, j) => <Cell key={j} t={c} />)}
            </div>
          ))}
        </div>
        <div className="flex-1 flex flex-col items-center pt-[4px] pl-[1px] h-[673px]">
          <svg width="8" height="8" viewBox="0 0 8 8"><path d="M4 0l4 8H0z" fill="#6e6e6e" /></svg>
          <i className="block mt-[5px] w-[9px] h-[85px] rounded-full bg-[#6e6e6e]" />
          <div className="flex-1" />
          <svg width="8" height="8" viewBox="0 0 8 8" className="mb-[2px]"><path d="M4 8 8 0H0z" fill="#6e6e6e" /></svg>
        </div>
      </div>

      {/* Sheet tabs */}
      <div className="h-[31px] flex items-start text-[14.5px] text-[#444]">
        <ChevronLeft size={16} strokeWidth={1} className="ml-[24px] mt-[9px] text-[#999]" />
        <ChevronRight size={16} strokeWidth={1} className="ml-[16px] mt-[9px] text-[#999]" />
        <div className="ml-[43px] w-[170px] h-[28px] rounded-b-[6px] bg-white shadow-[0_1px_2px_rgba(0,0,0,0.2)] flex flex-col items-center">
          <span className="h-[23px] leading-[23px] whitespace-pre">取引先企業  (Account)</span>
          <i className="block w-[153px] h-[2px] bg-[#107c41]" />
        </div>
        <i className="block ml-[4px] mt-[6px] w-px h-[20px] bg-[#d2d2d2]" />
        <span className="ml-[15px] w-[158px] mt-[3px] h-[23px] leading-[23px] whitespace-pre">取引先担当者  (Contact)</span>
        <i className="block ml-[15px] mt-[6px] w-px h-[20px] bg-[#d2d2d2]" />
        <span className="ml-[17px] w-[156px] mt-[3px] h-[23px] leading-[23px] whitespace-pre">営業案件 (Opportunity)</span>
        <i className="block ml-[15px] mt-[6px] w-px h-[20px] bg-[#d2d2d2]" />
        <Plus size={16} strokeWidth={1} className="ml-[41px] mt-[8px]" />
        <div className="ml-[429px] mt-[8px] w-[3px]"><svg width="3" height="13" viewBox="0 0 3 13"><path d="M1.500 0v2.500M1.500 5v2.500M1.500 10v2.500" stroke="#444" strokeWidth="1.500" /></svg></div>
        <div className="ml-[16px] mt-[5px] w-[731px] h-[20px] rounded-full bg-[#f6f6f6] flex items-center">
          <svg width="6" height="9" viewBox="0 0 6 9" className="ml-[4px]"><path d="M0 4.500 6 0v9z" fill="#777" /></svg>
          <i className="block ml-[4px] w-[323px] h-[10px] rounded-full bg-[#6e6e6e]" />
          <div className="flex-1" />
          <svg width="6" height="9" viewBox="0 0 6 9" className="mr-[9px]"><path d="M6 4.500 0 0v9z" fill="#777" /></svg>
        </div>
      </div>

      {/* Status bar */}
      <div className="h-[21px] flex items-center border-t border-[#f7f7f7] text-[11.5px] text-[#444]">
        <span className="ml-[11px] w-[48px] whitespace-nowrap">準備完了</span>
        <svg width="14" height="15" viewBox="0 0 14 15" className="ml-[20px]"><path d="M.5.5h13v14H.5zM3 4h8M3 6.500h5" fill="none" stroke="#444" /><circle cx="9" cy="10" r="2.500" fill="none" stroke="#444" /><circle cx="9" cy="10" r="1" fill="#444" /></svg>
        <svg width="14" height="16" viewBox="0 0 14 16" className="ml-[18px]"><circle cx="7" cy="2.500" r="1.700" fill="none" stroke="#444" /><path d="M1 5c4 1.500 8 1.500 12 0M7 6v4M4.500 15 7 10l2.500 5" fill="none" stroke="#444" /></svg>
        <span className="ml-[5px] w-[147px] whitespace-nowrap tracking-[-1px]">アクセシビリティ: 問題ありません</span>
        <div className="flex-1" />
        <svg width="13" height="14" viewBox="0 0 13 14"><path d="M6 10H.5V.5h12V6" fill="none" stroke="#444" /><circle cx="9" cy="10" r="3" fill="none" stroke="#444" /><circle cx="9" cy="10" r="1" fill="#444" /></svg>
        <span className="ml-[2px] w-[52px] whitespace-nowrap">表示設定</span>
        <div className="ml-[18px] w-[40px] h-[20px] bg-[#dcdcdc] flex items-center justify-center">
          <svg width="14" height="14" viewBox="0 0 14 14"><path d="M.5.5h13v13H.5zM.5 5h13M.5 9.500h13M5 .5v13M9.500.5v13" fill="none" stroke="#444" /></svg>
        </div>
        <div className="w-[38px] flex justify-center"><svg width="13" height="14" viewBox="0 0 13 14"><path d="M.5.5h12v13H.5zM3 3.500h7v7H3z" fill="none" stroke="#444" /></svg></div>
        <div className="w-[42px] flex justify-center"><svg width="13" height="13" viewBox="0 0 13 13"><path d="M.5 3V12.500H12.500V.5H.5V3M5 .5v6h4v-6M.5 9h12" fill="none" stroke="#444" /></svg></div>
        <Minus size={8} strokeWidth={1.2} className="ml-[3px]" />
        <div className="ml-[6px] w-[96px] h-[12px] flex items-center">
          <i className="block w-[50px] h-px bg-[#444]" /><i className="block w-[3px] h-[12px] bg-[#444]" /><i className="block w-[43px] h-px bg-[#444]" />
        </div>
        <Plus size={9} strokeWidth={1.2} className="ml-[11px]" />
        <span className="ml-[9px] mr-[7px] w-[34px] text-[12.5px] text-right whitespace-nowrap">100%</span>
      </div>
    </div>
  );
}
